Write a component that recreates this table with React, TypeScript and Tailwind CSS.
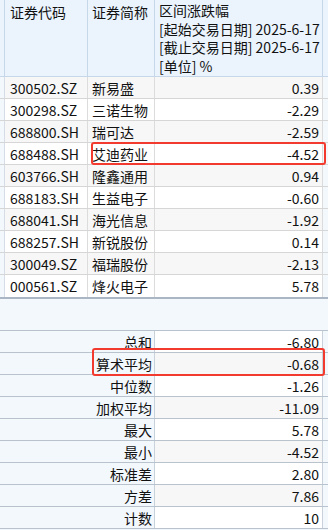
const ROWS = [
  ['300502.SZ', '新易盛', '0.39'],
  ['300298.SZ', '三诺生物', '-2.29'],
  ['688800.SH', '瑞可达', '-2.59'],
  ['688488.SH', '艾迪药业', '-4.52'],
  ['603766.SH', '隆鑫通用', '0.94'],
  ['688183.SH', '生益电子', '-0.60'],
  ['688041.SH', '海光信息', '-1.92'],
  ['688257.SH', '新锐股份', '0.14'],
  ['300049.SZ', '福瑞股份', '-2.13'],
  ['000561.SZ', '烽火电子', '5.78'],
]

const STATS = [
  ['总和', '-6.80'],
  ['算术平均', '-0.68'],
  ['中位数', '-1.26'],
  ['加权平均', '-11.09'],
  ['最大', '5.78'],
  ['最小', '-4.52'],
  ['标准差', '2.80'],
  ['方差', '7.86'],
  ['计数', '10'],
]

export default function App() {
  return (
    <div className="relative w-[328px] h-[530px] overflow-hidden bg-[#f3f8fd] font-['Noto_Sans_CJK_SC',sans-serif] text-[14px] leading-[22px] text-[#111]">
      {/* header */}
      <div className="flex h-[77px] border-b border-[#c6d7ea] bg-[#ebf4fd]">
        <div className="w-[5px] border-r border-[#c6d7ea]" />
        <div className="w-[83px] border-r border-[#c6d7ea] pl-[5px] pt-[1px]">证券代码</div>
        <div className="w-[67px] border-r border-[#c6d7ea] pl-[4px] pt-[1px]">证券简称</div>
        <div className="w-[168px] border-r border-[#c6d7ea] pl-[4px] pt-[1px] leading-[18.5px]">
          <div>区间涨跌幅</div>
          <div>[起始交易日期] 2025-6-17</div>
          <div>[截止交易日期] 2025-6-17</div>
          <div>[单位] %</div>
        </div>
        <div className="flex-1" />
      </div>

      {/* data rows */}
      <div className="border-b-2 border-[#aab6c3]">
        {ROWS.map(([code, name, val], i) => (
          <div key={code} className={`flex h-[22px] border-b border-[#d6d6d6] last:border-b-0 ${i % 2 === 0 ? 'bg-[#f7f7f7]' : 'bg-white'}`}>
            <div className="w-[5px] border-r border-[#d6dde6] bg-[#f3f8fd]" />
            <div className="w-[83px] border-r border-[#dcdcdc] pl-[5px]">{code}</div>
            <div className="w-[67px] border-r border-[#dcdcdc] pl-[4px]">{name}</div>
            <div className="w-[168px] border-r border-[#dcdcdc] pr-[3px] text-right">{val}</div>
            <div className="flex-1 bg-[#f3f8fd]" />
          </div>
        ))}
      </div>

      <div className="h-[31px]" />

      {/* stats */}
      <div className="border-t border-[#b9c3ce]">
        {STATS.map(([label, val], i) => (
          <div key={label} className="flex h-[22px] border-b border-[#b9c3ce]">
            <div className="w-[155px] border-r border-[#c9d1da] bg-[#f3f8fd] pr-[2px] text-right">{label}</div>
            <div className={`w-[168px] border-r border-[#c9d1da] pr-[3px] text-right ${i % 2 === 1 ? 'bg-[#f7f7f7]' : 'bg-white'}`}>{val}</div>
            <div className="flex-1" />
          </div>
        ))}
      </div>

      {/* highlight boxes */}
      <div className="absolute left-[91px] top-[142px] w-[235px] h-[23px] rounded-[3px] border-2 border-[#f23a2e]" />
      <div className="absolute left-[92px] top-[348px] w-[233px] h-[28px] rounded-[3px] border-2 border-[#f23a2e]" />
    </div>
  )
}
